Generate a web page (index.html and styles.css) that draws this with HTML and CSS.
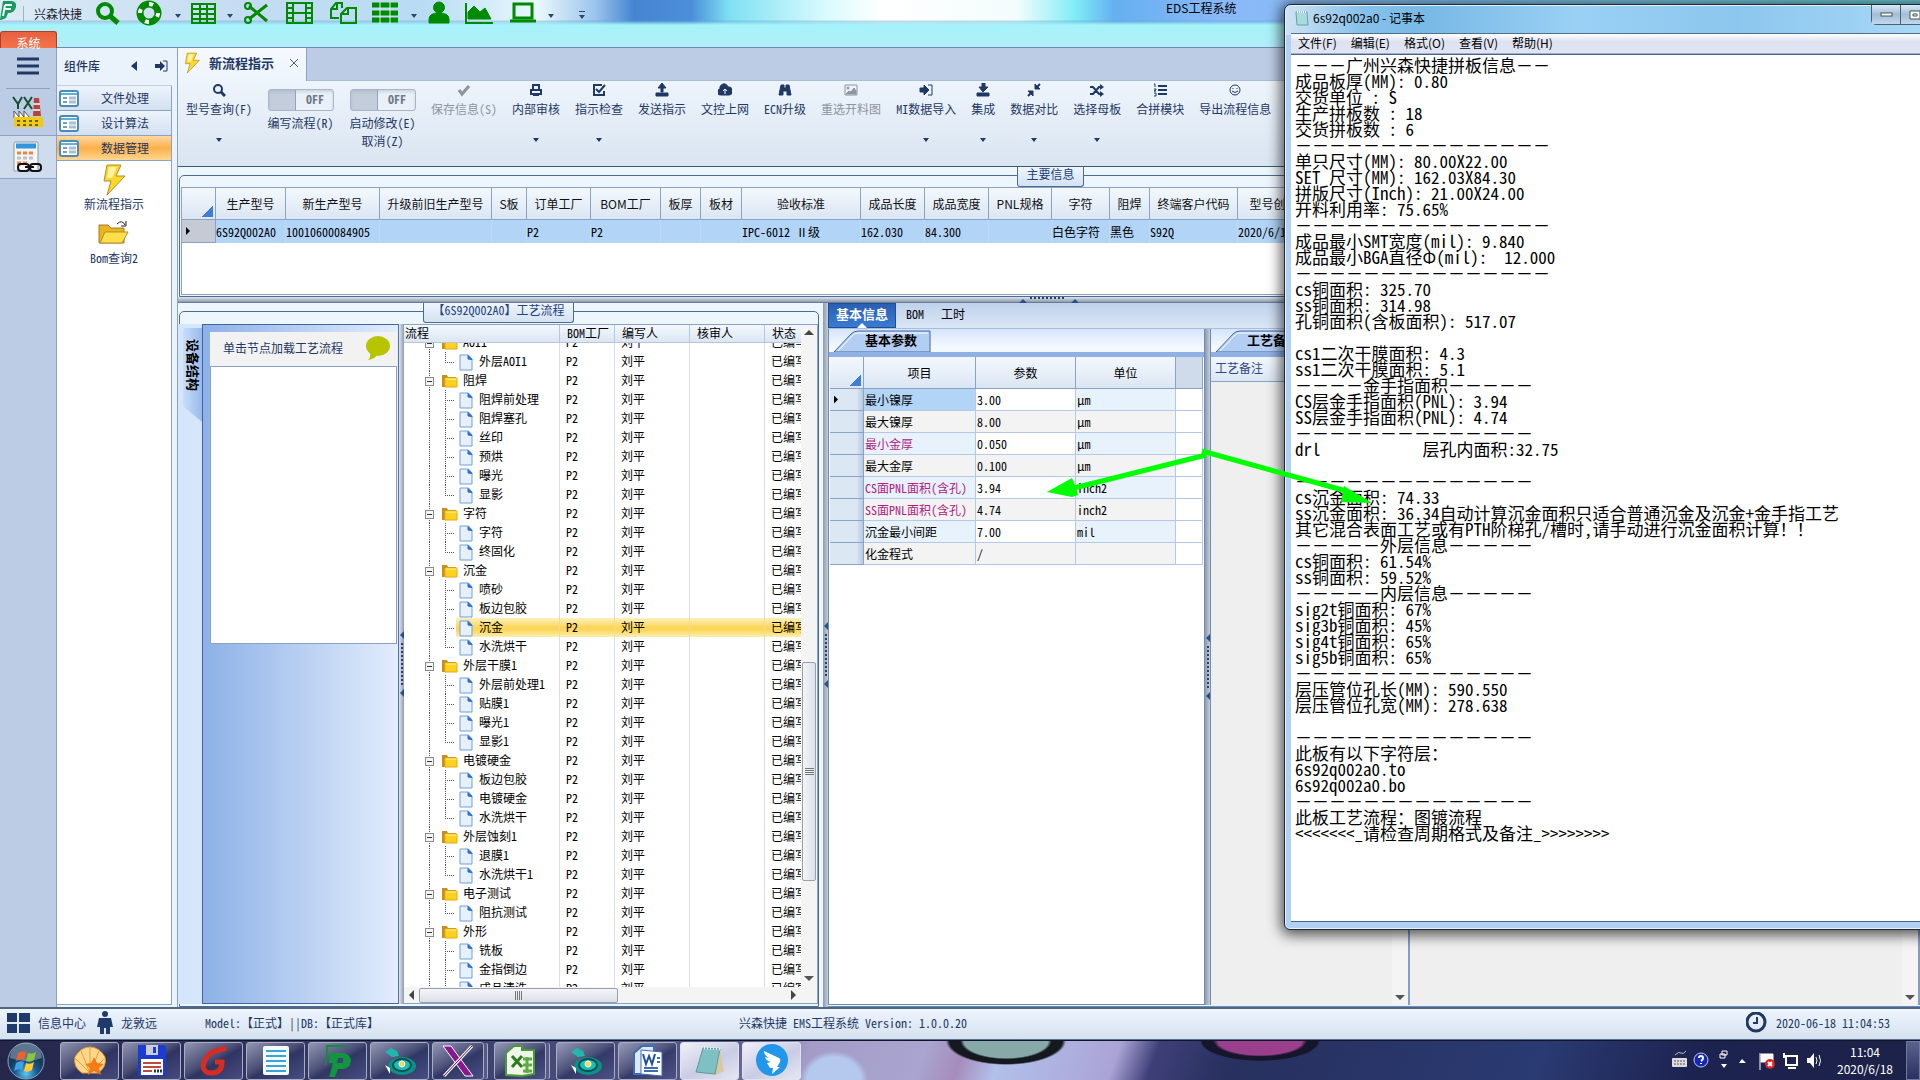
FILE: index.html
```
<!DOCTYPE html>
<html lang="zh-CN">
<head>
<meta charset="utf-8">
<title>EDS工程系统</title>
<link rel="stylesheet" href="styles.css">
</head>
<body>
<svg class="defs" aria-hidden="true">
  <symbol id="doc" viewBox="0 0 14 17"><path d="M1 1h8.500l3.500 4v11H1z" fill="#e6f0ff" stroke="#6f9fdc"/><path d="M9 1.500l4 4-4-.5z" fill="#2c6cd0" stroke="#2c6cd0"/></symbol>
  <symbol id="folder" viewBox="0 0 16 14"><path d="M0 1h5l1 2h8v10H0z" fill="#c98f1c"/><path d="M3 4h12v9H3z" fill="#ffd21f" stroke="#e8a90c"/><path d="M3.500 5h11" stroke="#fff2a0"/></symbol>
  <symbol id="form" viewBox="0 0 20 17"><rect x="1" y="1" width="18" height="15" rx="2" fill="#fff" stroke="#4d8bb5" stroke-width="2"/><path d="M2 4h16" stroke="#56b5df" stroke-width="2"/><path d="M4 8h4M4 12h4" stroke="#7a9cc0" stroke-width="2"/><path d="M10 8h7M10 12h7" stroke="#a9bfd8" stroke-width="3"/></symbol>
  <symbol id="bolt" viewBox="0 0 24 32"><path d="M5 1h14l-5 11h9L5 31l4-14H2z" fill="#ffd62a" stroke="#b08a2c"/><path d="M7 3h8l-5 11H5z" fill="#fff3a6"/></symbol>
  <symbol id="orca" viewBox="0 0 34 32"><ellipse cx="19" cy="21" rx="14" ry="9" fill="#0e8f88"/><ellipse cx="19" cy="20" rx="9" ry="6" fill="#19c0b6" stroke="#064e50" stroke-width="2"/><circle cx="19" cy="19" r="3" fill="#ffd84a" stroke="#fff"/><path d="M2 7l6-4 6 3 2 5-7 1z" fill="#20b8ae"/><path d="M2 20l5 3v6z" fill="#fff"/></symbol>
</svg>

<header class="titlebar">
  <div class="quick">
    <svg class="logo" width="17" height="20" viewBox="0 0 17 20"><path d="M3 0h9q5 1 4 6-1 5-6 6H8l-2 5-5 2H0z" fill="#1d9a62"/><path d="M5 4h7M5 4L3 15M5 8h6" stroke="#e9fff3" stroke-width="2" fill="none"/></svg>
    <span class="brand">兴森快捷</span>
    <svg class="q" width="458" height="26" viewBox="0 0 458 26" fill="none" stroke="#008a00">
      <circle cx="9" cy="11" r="7" stroke-width="4"/><path d="M14 16l8 7" stroke-width="5"/>
      <circle cx="53" cy="13" r="9" stroke-width="7"/><circle cx="53" cy="13" r="9" stroke="#fff" stroke-width="4" stroke-dasharray="4 10.100"/>
      <path d="M96 4h23v19H96zM96 9h23M96 14h23M96 19h23M104 4v19M111 4v19" stroke-width="2"/>
      <path d="M171 21L153 6M171 5l-18 14" stroke-width="3"/><circle cx="152" cy="6" r="3" stroke-width="2"/><circle cx="152" cy="20" r="3" stroke-width="2"/>
      <path d="M191 3h25v20h-25zM197 3v20M210 3v20M197 13h13M191 8h6M191 13h6M191 18h6M210 8h6M210 13h6M210 18h6" stroke-width="2"/>
      <path d="M246 8V3h-6l-5 6v9h8M241 3v6h-6" stroke-width="2"/><path d="M260 8h-9l-6 6v9h15V8zM252 8v6h-7" stroke-width="2"/>
      <path d="M276 5h26M276 13h26M276 20h26" stroke-width="5"/><path d="M284 2v22M294 2v22" stroke="#dff3f4"/>
      <path d="M343 2a5 5 0 0 1 0 11a5 5 0 0 1 0-11M333 23v-4q0-6 10-6t10 6v4z" fill="#008a00"/>
      <path d="M370 3v20h27" stroke-width="2"/><path d="M372 19v-7l6-6 6 6 5-4 6 11z" fill="#008a00"/>
      <path d="M418 4h18v14h-18z" stroke-width="3"/><path d="M414 21h26" stroke-width="3"/>
      <g fill="#28496d" stroke="none"><path d="M79 14h6l-3 4zM131 14h6l-3 4zM315 14h6l-3 4zM452 14h6l-3 4z"/></g>
    </svg>
    <span class="more" aria-hidden="true"></span>
  </div>
  <h1>EDS工程系统</h1>
  <button class="systab">系统</button>
</header>

<main>
  <nav class="rail">
    <button aria-label="菜单"><svg width="22" height="18" viewBox="0 0 22 18"><path d="M0 2h22M0 9h22M0 16h22" stroke="#1f3864" stroke-width="3"/></svg></button>
    <button aria-label="工厂"><svg width="32" height="32" viewBox="0 0 32 32"><path d="M1 1l5 7 4-7M6 8v5M12 1l8 12M20 1l-8 12" fill="none" stroke="#15502e" stroke-width="2"/><path d="M21 20l1-18h5l2 18z" fill="#b5433e"/><path d="M21 8h7M21 14h7" stroke="#e4d3d3" stroke-width="2"/><path d="M2 22v-7l5 6v-6l5 6v-6l6 7z" fill="#fff" stroke="#555"/><path d="M2 21h29v10H2z" fill="#f2cb10"/><path d="M5 25h24M5 29h24" stroke="#705c00" stroke-width="2" stroke-dasharray="3 3"/></svg></button>
    <button class="on" aria-label="计算"><svg width="30" height="32" viewBox="0 0 30 32"><rect x="1" y="1" width="24" height="29" rx="1" fill="#f6f6f6" stroke="#8a98a6"/><path d="M3 5h20" stroke="#2f97dd" stroke-width="5"/><path d="M4 12h17M4 22h10" stroke="#f28440" stroke-width="3" stroke-dasharray="4 2"/><path d="M4 17h17" stroke="#b9c1c9" stroke-width="3" stroke-dasharray="4 2"/><g fill="none" stroke="#111" stroke-width="2"><rect x="5" y="23" width="11" height="7" rx="3"/><rect x="17" y="23" width="11" height="7" rx="3"/><path d="M12 26h9"/></g></svg></button>
  </nav>

  <aside class="library">
    <div class="lib-head"><h2>组件库</h2>
      <svg width="38" height="12" viewBox="0 0 38 12"><path d="M6 1v10L0 6z" fill="#1f3864"/><path d="M24 4h5V1l5 5-5 5V8h-5z" fill="#1f3864"/><path d="M32 1h4v10h-4" fill="none" stroke="#1f3864"/></svg>
    </div>
    <div class="lib-body">
      <button class="cat"><svg width="20" height="17"><use href="#form"/></svg><span>文件处理</span></button>
      <button class="cat"><svg width="20" height="17"><use href="#form"/></svg><span>设计算法</span></button>
      <button class="cat on"><svg width="20" height="17"><use href="#form"/></svg><span>数据管理</span></button>
      <a class="tool" href="#flow"><svg width="24" height="32"><use href="#bolt"/></svg>新流程指示</a>
      <a class="tool" href="#bom"><svg width="32" height="26" viewBox="0 0 32 26"><path d="M1 5h9l3 3h13v15H1z" fill="#e9b41c" stroke="#9c8038"/><path d="M7 12h23l-6 11H2z" fill="#ffe04a" stroke="#b08f2c"/><path d="M19 4q5-5 8 1M28 1v5h-5" fill="none" stroke="#222"/></svg>Bom查询2</a>
    </div>
  </aside>

  <section class="work">
    <div class="doc-tabs"><div class="doc-tab"><svg width="16" height="24" viewBox="0 0 24 32"><use href="#bolt"/></svg><b>新流程指示</b><button aria-label="关闭"><svg width="8" height="8" viewBox="0 0 8 8"><path d="M0 0l8 8M8 0L0 8" stroke="#4a6080"/></svg></button></div></div>

    <div class="toolbar">
      <button><svg class="g" viewBox="0 0 14 14"><circle cx="6" cy="6" r="4" fill="none" stroke-width="2"/><path d="M9 9l4 4" stroke-width="3"/></svg><span>型号查询(F)</span><i></i></button>
      <label class="switch"><input type="checkbox"><b>OFF</b><span>编写流程(R)</span></label>
      <label class="switch"><input type="checkbox"><b>OFF</b><span>启动修改(E)</span><span>取消(Z)</span></label>
      <button disabled><svg class="g" viewBox="0 0 14 14"><path d="M2 7l3 4 7-8" fill="none" stroke-width="3"/></svg><span>保存信息(S)</span></button>
      <button><svg class="g" viewBox="0 0 14 14"><path d="M4 6V2h6v4M2 7h10v4H2z" stroke-width="2" fill="none"/><path d="M4 12h6" stroke-width="2"/></svg><span>内部审核</span><i></i></button>
      <button><svg class="g" viewBox="0 0 14 14"><path d="M12 8v4H2V2h8" stroke-width="2" fill="none"/><path d="M4 6l3 3 6-7" stroke-width="2" fill="none"/></svg><span>指示检查</span><i></i></button>
      <button><svg class="g" viewBox="0 0 14 14"><path d="M7 0l4 5H8v4H6V5H3zM1 10h12v3H1z"/></svg><span>发送指示</span></button>
      <button><svg class="g" viewBox="0 0 14 14"><path d="M3 12a3 3 0 0 1-1-6 4 4 0 0 1 8-2 4 4 0 0 1 1 8z"/><path d="M7 11V6M5 8l2-2 2 2" stroke="#fff" fill="none"/></svg><span>文控上网</span></button>
      <button><svg class="g" viewBox="0 0 14 14"><path d="M3 2h3v3h2V2h3l2 10H9V8H5v4H1z"/></svg><span>ECN升级</span></button>
      <button disabled><svg class="g" viewBox="0 0 14 14"><path d="M1 2h12v10H1z" fill="none"/><path d="M2 11l3-3 2 1 3-4 2 3v3z"/><circle cx="4" cy="5" r="1"/></svg><span>重选开料图</span></button>
      <button><svg class="g" viewBox="0 0 14 14"><path d="M1 5h4V2l5 5-5 5V9H1z"/><path d="M9 2h4v10H9" fill="none"/></svg><span>MI数据导入</span><i></i></button>
      <button><svg class="g" viewBox="0 0 14 14"><path d="M6 0h3v4h3L7 9 3 4h3zM1 10h12v3H1z"/></svg><span>集成</span><i></i></button>
      <button><svg class="g" viewBox="0 0 14 14"><path d="M8 1v5h5zM6 13V8H1z"/><path d="M9 5l4-4M5 9l-4 4" stroke-width="2"/></svg><span>数据对比</span><i></i></button>
      <button><svg class="g" viewBox="0 0 14 14"><path d="M0 4h3l6 7h2M0 11h3l6-7h2" fill="none" stroke-width="2"/><path d="M10 1l4 3-4 3zM10 8l4 3-4 3z" stroke="none"/></svg><span>选择母板</span><i></i></button>
      <button><svg class="g" viewBox="0 0 14 14"><path d="M5 3h9M5 7h9M5 11h9" stroke-width="2"/><path d="M1 1h1v3M1 6h2v1L1 8h2M1 10h2v3H1" fill="none"/></svg><span>合拼模块</span></button>
      <button><svg class="g" viewBox="0 0 14 14"><circle cx="7" cy="7" r="5" fill="none"/><path d="M5 5v1M9 5v1M4 8q3 3 6 0" fill="none"/></svg><span>导出流程信息</span></button>
    </div>

    <section class="group main-info">
      <h3>主要信息</h3>
      <div class="grid-box">
        <table class="grid">
          <colgroup><col style="width:34px"><col style="width:70px"><col style="width:94px"><col style="width:112px"><col style="width:35px"><col style="width:64px"><col style="width:70px"><col style="width:40px"><col style="width:41px"><col style="width:119px"><col style="width:64px"><col style="width:64px"><col style="width:63px"><col style="width:58px"><col style="width:40px"><col style="width:88px"><col style="width:96px"><col></colgroup>
          <thead><tr><th class="corner"></th><th>生产型号</th><th>新生产型号</th><th>升级前旧生产型号</th><th>S板</th><th>订单工厂</th><th>BOM工厂</th><th>板厚</th><th>板材</th><th>验收标准</th><th>成品长度</th><th>成品宽度</th><th>PNL规格</th><th>字符</th><th>阻焊</th><th>终端客户代码</th><th>型号创建时间</th><th></th></tr></thead>
          <tbody><tr><th class="mark"></th><td>6S92Q002A0</td><td>10010600084905</td><td></td><td></td><td>P2</td><td>P2</td><td></td><td></td><td>IPC-6012 Ⅱ级</td><td>162.030</td><td>84.300</td><td></td><td>白色字符</td><td>黑色</td><td>S92Q</td><td>2020/6/18</td><td></td></tr></tbody>
        </table>
      </div>
    </section>
    <div class="split-h"><svg width="60" height="6" viewBox="0 0 60 6"><path d="M0 6l4-4 4 4zM52 6l4-4 4 4z" fill="#2d4f88"/><path d="M11 1h36" stroke="#2d3f70" stroke-width="2" stroke-dasharray="2 2"/></svg></div>

    <div class="lower">
      <section class="group flow" id="flow">
        <h3>【6S92Q002A0】工艺流程</h3>
        <div class="flow-body">
          <div class="vtab"><b>设备结构</b></div>
          <div class="device">
            <div class="hint"><span>单击节点加载工艺流程</span><svg width="25" height="26" viewBox="0 0 25 26"><ellipse cx="12" cy="11" rx="12" ry="10" fill="#b9c400"/><path d="M4 17q1 5-2 8 7-1 9-5z" fill="#b9c400"/></svg></div>
            <div class="blank"></div>
          </div>
          <div class="split-v"><svg width="5" height="66" viewBox="0 0 5 66"><path d="M5 0v8L1 4zM5 58v8l-4-4z" fill="#2d4f88"/><path d="M3 12v42" stroke="#2d3f70" stroke-width="2" stroke-dasharray="2 2"/></svg></div>
          <div class="tree-box">
            <div class="tree-main">
              <div class="tree-head"><span>流程</span><span>BOM工厂</span><span>编写人</span><span>核审人</span><span>状态</span></div>
              <div class="tree-clip">
              <table class="tree">
                <colgroup><col style="width:156px"><col style="width:55px"><col style="width:75px"><col style="width:75px"><col></colgroup>
                <tbody>
                <tr><td class="f"><button aria-label="折叠"></button><svg><use href="#folder"/></svg>AOI1</td><td>P2</td><td>刘平</td><td></td><td>已编写</td></tr>
                <tr><td class="l e"><svg><use href="#doc"/></svg>外层AOI1</td><td>P2</td><td>刘平</td><td></td><td>已编写</td></tr>
                <tr><td class="f"><button aria-label="折叠"></button><svg><use href="#folder"/></svg>阻焊</td><td>P2</td><td>刘平</td><td></td><td>已编写</td></tr>
                <tr><td class="l"><svg><use href="#doc"/></svg>阻焊前处理</td><td>P2</td><td>刘平</td><td></td><td>已编写</td></tr>
                <tr><td class="l"><svg><use href="#doc"/></svg>阻焊塞孔</td><td>P2</td><td>刘平</td><td></td><td>已编写</td></tr>
                <tr><td class="l"><svg><use href="#doc"/></svg>丝印</td><td>P2</td><td>刘平</td><td></td><td>已编写</td></tr>
                <tr><td class="l"><svg><use href="#doc"/></svg>预烘</td><td>P2</td><td>刘平</td><td></td><td>已编写</td></tr>
                <tr><td class="l"><svg><use href="#doc"/></svg>曝光</td><td>P2</td><td>刘平</td><td></td><td>已编写</td></tr>
                <tr><td class="l e"><svg><use href="#doc"/></svg>显影</td><td>P2</td><td>刘平</td><td></td><td>已编写</td></tr>
                <tr><td class="f"><button aria-label="折叠"></button><svg><use href="#folder"/></svg>字符</td><td>P2</td><td>刘平</td><td></td><td>已编写</td></tr>
                <tr><td class="l"><svg><use href="#doc"/></svg>字符</td><td>P2</td><td>刘平</td><td></td><td>已编写</td></tr>
                <tr><td class="l e"><svg><use href="#doc"/></svg>终固化</td><td>P2</td><td>刘平</td><td></td><td>已编写</td></tr>
                <tr><td class="f"><button aria-label="折叠"></button><svg><use href="#folder"/></svg>沉金</td><td>P2</td><td>刘平</td><td></td><td>已编写</td></tr>
                <tr><td class="l"><svg><use href="#doc"/></svg>喷砂</td><td>P2</td><td>刘平</td><td></td><td>已编写</td></tr>
                <tr><td class="l"><svg><use href="#doc"/></svg>板边包胶</td><td>P2</td><td>刘平</td><td></td><td>已编写</td></tr>
                <tr class="sel"><td class="l"><svg><use href="#doc"/></svg>沉金</td><td>P2</td><td>刘平</td><td></td><td>已编写</td></tr>
                <tr><td class="l e"><svg><use href="#doc"/></svg>水洗烘干</td><td>P2</td><td>刘平</td><td></td><td>已编写</td></tr>
                <tr><td class="f"><button aria-label="折叠"></button><svg><use href="#folder"/></svg>外层干膜1</td><td>P2</td><td>刘平</td><td></td><td>已编写</td></tr>
                <tr><td class="l"><svg><use href="#doc"/></svg>外层前处理1</td><td>P2</td><td>刘平</td><td></td><td>已编写</td></tr>
                <tr><td class="l"><svg><use href="#doc"/></svg>贴膜1</td><td>P2</td><td>刘平</td><td></td><td>已编写</td></tr>
                <tr><td class="l"><svg><use href="#doc"/></svg>曝光1</td><td>P2</td><td>刘平</td><td></td><td>已编写</td></tr>
                <tr><td class="l e"><svg><use href="#doc"/></svg>显影1</td><td>P2</td><td>刘平</td><td></td><td>已编写</td></tr>
                <tr><td class="f"><button aria-label="折叠"></button><svg><use href="#folder"/></svg>电镀硬金</td><td>P2</td><td>刘平</td><td></td><td>已编写</td></tr>
                <tr><td class="l"><svg><use href="#doc"/></svg>板边包胶</td><td>P2</td><td>刘平</td><td></td><td>已编写</td></tr>
                <tr><td class="l"><svg><use href="#doc"/></svg>电镀硬金</td><td>P2</td><td>刘平</td><td></td><td>已编写</td></tr>
                <tr><td class="l e"><svg><use href="#doc"/></svg>水洗烘干</td><td>P2</td><td>刘平</td><td></td><td>已编写</td></tr>
                <tr><td class="f"><button aria-label="折叠"></button><svg><use href="#folder"/></svg>外层蚀刻1</td><td>P2</td><td>刘平</td><td></td><td>已编写</td></tr>
                <tr><td class="l"><svg><use href="#doc"/></svg>退膜1</td><td>P2</td><td>刘平</td><td></td><td>已编写</td></tr>
                <tr><td class="l e"><svg><use href="#doc"/></svg>水洗烘干1</td><td>P2</td><td>刘平</td><td></td><td>已编写</td></tr>
                <tr><td class="f"><button aria-label="折叠"></button><svg><use href="#folder"/></svg>电子测试</td><td>P2</td><td>刘平</td><td></td><td>已编写</td></tr>
                <tr><td class="l e"><svg><use href="#doc"/></svg>阻抗测试</td><td>P2</td><td>刘平</td><td></td><td>已编写</td></tr>
                <tr><td class="f"><button aria-label="折叠"></button><svg><use href="#folder"/></svg>外形</td><td>P2</td><td>刘平</td><td></td><td>已编写</td></tr>
                <tr><td class="l"><svg><use href="#doc"/></svg>铣板</td><td>P2</td><td>刘平</td><td></td><td>已编写</td></tr>
                <tr><td class="l"><svg><use href="#doc"/></svg>金指倒边</td><td>P2</td><td>刘平</td><td></td><td>已编写</td></tr>
                <tr><td class="l"><svg><use href="#doc"/></svg>成品清洗</td><td>P2</td><td>刘平</td><td></td><td>已编写</td></tr>
                </tbody>
              </table>
              </div>
              <div class="hbar"><span class="al"></span><span class="thumb"></span><span class="ar"></span></div>
            </div>
            <div class="vbar"><span class="au"></span><span class="thumb"></span><span class="ad"></span></div>
          </div>
        </div>
      </section>
      <div class="split-v outer"><svg width="5" height="66" viewBox="0 0 5 66"><path d="M5 0v8L1 4zM5 58v8l-4-4z" fill="#2d4f88"/><path d="M3 12v42" stroke="#2d3f70" stroke-width="2" stroke-dasharray="2 2"/></svg></div>

      <section class="detail">
        <div class="tabs"><button class="on">基本信息</button><button>BOM</button><button>工时</button></div>
        <div class="panes">
          <div class="pane params">
            <div class="strip"><svg width="100" height="22" viewBox="0 0 100 22"><path d="M3 22L20 4q3-3 7-3h72v21z" fill="#b4cdf2" stroke="#3f68a8"/><path d="M7 21L22 5q2-2 5-2h70" fill="none" stroke="#fff"/></svg><b>基本参数</b></div>
            <div class="pane-body">
            <table class="ptable">
              <colgroup><col style="width:34px"><col style="width:112px"><col style="width:100px"><col style="width:100px"><col></colgroup>
              <thead><tr><th class="corner"></th><th>项目</th><th>参数</th><th>单位</th><th class="pad"></th></tr></thead>
              <tbody>
              <tr><th class="mark"></th><td class="cur">最小镍厚</td><td>3.00</td><td>μm</td><td></td></tr>
              <tr><th></th><td>最大镍厚</td><td>8.00</td><td>μm</td><td></td></tr>
              <tr><th></th><td class="key">最小金厚</td><td>0.050</td><td>μm</td><td></td></tr>
              <tr><th></th><td>最大金厚</td><td>0.100</td><td>μm</td><td></td></tr>
              <tr><th></th><td class="key">CS面PNL面积(含孔)</td><td>3.94</td><td>inch2</td><td></td></tr>
              <tr><th></th><td class="key">SS面PNL面积(含孔)</td><td>4.74</td><td>inch2</td><td></td></tr>
              <tr><th></th><td>沉金最小间距</td><td>7.00</td><td>mil</td><td></td></tr>
              <tr><th></th><td>化金程式</td><td>/</td><td></td><td></td></tr>
              </tbody>
            </table>
            </div>
          </div>
          <div class="split-v outer"><svg width="5" height="66" viewBox="0 0 5 66"><path d="M5 0v8L1 4zM5 58v8l-4-4z" fill="#2d4f88"/><path d="M3 12v42" stroke="#2d3f70" stroke-width="2" stroke-dasharray="2 2"/></svg></div>
          <div class="pane notes">
            <div class="strip"><svg width="100" height="22" viewBox="0 0 100 22"><path d="M3 22L20 4q3-3 7-3h72v21z" fill="#b4cdf2" stroke="#3f68a8"/><path d="M7 21L22 5q2-2 5-2h70" fill="none" stroke="#fff"/></svg><b>工艺备注</b></div>
            <div class="note-cols">
              <div class="note-col"><h4>工艺备注</h4><div class="vbar"><span class="ad"></span></div></div>
              <div class="note-col last"><h4></h4><div class="vbar"><span class="ad"></span></div></div>
            </div>
          </div>
        </div>
      </section>
    </div>
  </section>
</main>

<footer class="status">
  <svg width="23" height="20" viewBox="0 0 23 20"><path d="M0 0h10v9H0zM12 0h11v9H12zM0 11h10v9H0zM12 11h11v9H12z" fill="#1f3b6e"/></svg>
  <span class="info">信息中心</span>
  <svg width="16" height="24" viewBox="0 0 16 24"><circle cx="8" cy="3" r="3" fill="#1f3b6e"/><path d="M2 7h12l2 9h-3v7H9v-6H7v6H3v-7H0z" fill="#1f3b6e"/></svg>
  <span class="user">龙敦远</span>
  <span class="model">Model:【正式】||DB:【正式库】</span>
  <span class="version">兴森快捷 EMS工程系统 Version: 1.0.0.20</span>
  <svg width="21" height="21" viewBox="0 0 21 21"><circle cx="10" cy="10" r="9" fill="none" stroke="#1f3864" stroke-width="3"/><path d="M11 5v6H7" fill="none" stroke="#1f3864" stroke-width="2"/></svg>
  <time>2020-06-18 11:04:53</time>
</footer>

<footer class="taskbar">
  <button class="start" aria-label="开始"><svg width="38" height="38" viewBox="0 0 38 38"><defs><radialGradient id="orb" cy=".85"><stop offset="0" stop-color="#5ec8f0"/><stop offset=".6" stop-color="#1a5a94"/><stop offset="1" stop-color="#173a5c"/></radialGradient></defs><circle cx="19" cy="19" r="18" fill="url(#orb)" stroke="#7fa8c4"/><path d="M3 16a16 15 0 0 1 32 0q-16 6-32 0" fill="#fff" opacity=".3"/><path d="M11 11q4-3 8-1l-2 8q-4-2-8 1z" fill="#f0622c"/><path d="M21 11q4 2 8-1l-2 8q-4 3-8 1z" fill="#8cc63f"/><path d="M9 21q4-3 8-1l-2 8q-4-2-8 1z" fill="#3fa2e4"/><path d="M19 21q4 2 8-1l-2 8q-4 3-8 1z" fill="#ffcb2f"/></svg></button>
  <button class="app" aria-label="贝壳"><svg width="34" height="32" viewBox="0 0 34 32"><path d="M9 28Q0 22 2 12 8 2 17 2t15 10q2 10-7 16z" fill="#ffd889" stroke="#e79d38"/><path d="M17 28L8 6M17 28V2M17 28l9-22M17 28L3 14M17 28l14-14" stroke="#e79d38"/><path d="M21 12l3 6 7 1-5 4 2 7-7-4-6 4 2-7-5-4 6-1z" fill="#f57a18"/></svg></button>
  <button class="app" aria-label="保存"><svg width="28" height="31" viewBox="0 0 28 31"><path d="M0 0h26l2 2v29H0z" fill="#1c3bd0"/><path d="M8 0h12v10H8z" fill="#c9ccd4"/><path d="M15 2h3v6h-3z" fill="#1c3bd0"/><path d="M3 14h22v16H3z" fill="#fff"/><path d="M5 18h18M5 22h18M5 26h9" stroke="#c2483c" stroke-width="2"/><path d="M16 26h8" stroke="#333" stroke-width="3" stroke-dasharray="2 1"/></svg></button>
  <button class="app" aria-label="Genesis"><svg width="30" height="31" viewBox="0 0 30 31"><path d="M27 3L13 7Q5 13 4 21q1 8 10 7 9-1 9-11h-7" fill="none" stroke="#d92c20" stroke-width="5"/></svg></button>
  <button class="app" aria-label="文本"><svg width="26" height="29" viewBox="0 0 26 29"><rect width="26" height="29" rx="2" fill="#f4fbff"/><path d="M3 5h20M3 10h20M3 15h20M3 20h20M3 25h20" stroke="#3aa5d4" stroke-width="2"/></svg></button>
  <button class="app" aria-label="快捷"><svg width="28" height="32" viewBox="0 0 28 32"><path d="M3 14V1h18M3 16l-2 4" fill="none" stroke="#0d8f3c" stroke-width="2"/><path d="M6 8h14q7 2 7 8-1 8-9 8h-4l-3 8H5l4-14h-4z" fill="#0f963f"/><path d="M14 13h5v5h-6z" fill="#3d4370"/></svg></button>
  <button class="app" aria-label="Orca"><svg width="34" height="32"><use href="#orca"/></svg></button>
  <button class="app stack" aria-label="X"><svg width="32" height="32" viewBox="0 0 32 32"><path d="M1 1h8l22 30h-8z" fill="#8a1690" stroke="#fff"/><path d="M30 1L2 31" stroke="#fff" stroke-width="3"/><path d="M30 1L2 31" stroke="#51105c"/></svg></button>
  <button class="app stack" aria-label="Excel"><svg width="30" height="32" viewBox="0 0 30 32"><path d="M1 30V8l8-7h8v4h12v24l-12 2z" fill="#eef6e9" stroke="#4d9a35" stroke-width="2"/><path d="M18 14h9M18 20h9M18 26h9M22 12v16" stroke="#5dab42" stroke-width="3"/><path d="M7 11l10 11M17 11L7 22" stroke="#2d7c22" stroke-width="3"/></svg></button>
  <button class="app" aria-label="Orca 2"><svg width="34" height="32"><use href="#orca"/></svg></button>
  <button class="app" aria-label="Word"><svg width="30" height="32" viewBox="0 0 30 32"><path d="M1 29V8l8-7h12v28z" fill="#dde9f8" stroke="#3d6cb5" stroke-width="2"/><path d="M8 5l21 2v24L8 29z" fill="#fff" stroke="#3d6cb5"/><path d="M10 9l3 10 3-8 3 8 3-10" fill="none" stroke="#244f9e" stroke-width="2"/><path d="M11 23h14M11 26h14M24 13h3M24 17h3" stroke="#3d6cb5" stroke-width="2"/></svg></button>
  <button class="app lit" aria-label="记事本"><svg width="32" height="32" viewBox="0 0 32 32"><path d="M9 3l17 1 4 22-8 4-20-3z" fill="#d9c9a0"/><path d="M9 3l17 1-5 25-19-2z" fill="#7fc0c4" stroke="#5d9ba0"/><path d="M10 3l16 1" stroke="#eee" stroke-width="3" stroke-dasharray="1 2"/></svg></button>
  <button class="app lit" aria-label="钉钉"><svg width="32" height="33" viewBox="0 0 32 33"><circle cx="16" cy="16" r="16" fill="#2296ea"/><path d="M8 7l15 7q2 1 1 4l-3 5h3l-8 7 1-6h-3l-3-5 4-1q-5-1-6-5l4 1q-5-3-5-7z" fill="#fff"/></svg></button>
  <svg class="tray" width="150" height="24" viewBox="0 0 150 24">
    <rect x="0" y="9" width="15" height="9" rx="1" fill="#ddd"/><path d="M2 12h11M2 15h11" stroke="#555" stroke-dasharray="2 1"/><path d="M3 6q4-4 6-2t5-2" fill="none" stroke="#bbb"/>
    <circle cx="29" cy="11" r="7" fill="#1428b8" stroke="#c5c9dc"/><path d="M27 9q0-2 2-2t2 2-2 3M29 14v1" fill="none" stroke="#fff" stroke-width="2"/>
    <path d="M50 2h5v4h-5zM48 5h5v4h-5z" fill="none" stroke="#fff"/><path d="M49 15h6l-3 4z" fill="#fff"/>
    <path d="M67 14h7l-4-4z" fill="#fff"/>
    <path d="M88 4v17M89 5h12v8H89z" fill="#fff" stroke="#fff"/><circle cx="98" cy="15" r="5" fill="#d22"/><path d="M96 13l4 4M100 13l-4 4" stroke="#fff" stroke-width="2"/>
    <path d="M114 7h11v9h-11zM116 19h8M112 4v5" fill="none" stroke="#fff" stroke-width="2"/>
    <path d="M135 9h3l4-5v15l-4-5h-3z" fill="#fff"/><path d="M144 8q2 4 0 7M147 6q3 6 0 11" fill="none" stroke="#fff"/>
  </svg>
  <div class="clock"><span>11:04</span><span>2020/6/18</span></div>
  <button class="peek" aria-label="显示桌面"></button>
</footer>

<section class="notepad">
  <header><svg width="14" height="16" viewBox="0 0 14 16"><path d="M1 2h11l1 13H2z" fill="#a9dcdf" stroke="#6b9fa8"/><path d="M2 2h10" stroke="#fff" stroke-width="2" stroke-dasharray="1 1"/></svg><h2>6s92q002a0 - 记事本</h2>
    <div class="win"><button aria-label="最小化"><svg width="13" height="5" viewBox="0 0 13 5"><rect x="1" y="1" width="11" height="3" fill="#fff" stroke="#455"/></svg></button><button aria-label="最大化"><svg width="12" height="10" viewBox="0 0 12 10"><path d="M1 1h10v8H1zM4 4h4v2H4z" fill="#fff" stroke="#455"/></svg></button></div></header>
  <nav><button>文件(F)</button><button>编辑(E)</button><button>格式(O)</button><button>查看(V)</button><button>帮助(H)</button></nav>
  <textarea aria-label="记事本内容" wrap="off" spellcheck="false">－－－广州兴森快捷拼板信息－－
成品板厚(MM): 0.80
交货单位 : S
生产拼板数 : 18
交货拼板数 : 6
－－－－－－－－－－－－－－－
单只尺寸(MM): 80.00X22.00
SET 尺寸(MM): 162.03X84.30
拼版尺寸(Inch): 21.00X24.00
开料利用率: 75.65%
－－－－－－－－－－－－－－－
成品最小SMT宽度(mil): 9.840
成品最小BGA直径Φ(mil):  12.000
－－－－－－－－－－－－－－－
cs铜面积: 325.70
ss铜面积: 314.98
孔铜面积(含板面积): 517.07

cs1二次干膜面积: 4.3
ss1二次干膜面积: 5.1
－－－－金手指面积－－－－－
CS层金手指面积(PNL): 3.94
SS层金手指面积(PNL): 4.74
－－－－－－－－－－－－－－
drl            层孔内面积:32.75

－－－－－－－－－－－－－－
cs沉金面积: 74.33
ss沉金面积: 36.34自动计算沉金面积只适合普通沉金及沉金+金手指工艺
其它混合表面工艺或有PTH阶梯孔/槽时,请手动进行沉金面积计算！！
－－－－－外层信息－－－－－
cs铜面积: 61.54%
ss铜面积: 59.52%
－－－－－内层信息－－－－－
sig2t铜面积: 67%
sig3b铜面积: 45%
sig4t铜面积: 65%
sig5b铜面积: 65%
－－－－－－－－－－－－－－
层压管位孔长(MM): 590.550
层压管位孔宽(MM): 278.638

－－－－－－－－－－－－－－
此板有以下字符层：
6s92q002a0.to
6s92q002a0.bo
－－－－－－－－－－－－－－
此板工艺流程：图镀流程
&lt;&lt;&lt;&lt;&lt;&lt;&lt;_请检查周期格式及备注_&gt;&gt;&gt;&gt;&gt;&gt;&gt;&gt;</textarea>
</section>

<svg class="arrows" width="332" height="60" viewBox="0 0 332 60"><path d="M166 10L34 43M162 6l144 40" stroke="#0f0" stroke-width="5"/><path d="M7 47l25-14 4 9 2 8-6 2zM332 58l-28-17-3 16z" fill="#0f0"/></svg>
</body>
</html>
```
FILE: styles.css
```
:root {
  --song: "Noto Sans Mono CJK SC", "Noto Sans CJK SC", sans-serif;
  --ui: "Noto Sans CJK SC", sans-serif;
  --navy: #1f3864;
  --line: #8aa2c4;
}
* { box-sizing: border-box; }
html, body { height: 100%; margin: 0; }
body {
  display: flex; flex-direction: column; position: relative; overflow: hidden;
  font: 12px/16px var(--song); color: #000; background: #bccce4;
}
h1, h2, h3, h4 { margin: 0; font-size: 12px; font-weight: 400; }
button { font: inherit; color: inherit; border: 0; padding: 0; margin: 0; background: none; }
svg { display: block; flex: none; }
.defs { display: none; }
table { border-collapse: separate; border-spacing: 0; table-layout: fixed; width: 100%; }
th, td { font-weight: 400; padding: 0; white-space: nowrap; overflow: hidden; }

/* title bar */
.titlebar {
  flex: none; height: 48px; position: relative; display: grid;
  grid-template-rows: 30px 18px; grid-template-columns: 1166px 1fr;
  background:
    linear-gradient(#0000 20px, #5a9fd066 21px, #a6f3fa 25px, #b2eefa),
    linear-gradient(90deg, #dcebf5, #c5dcf2 12%, #b8dcf4 22%, #eaf8fd 28%, #9cc4ec 31%, #4585d0 33%, #4d8edb 36%, #7fe0f4 38%, #d9fbfd 43%, #fff 46%, #f2fdfc 53%, #80edf6 56%, #65b0f0 58%, #8bb9f8 64%, #6fd0d8);
  border-bottom: 1px solid #6f8cb0;
}
.quick { display: flex; align-items: flex-start; }
.logo { margin-top: 1px; }
.brand { margin: 6px 14px 0 6px; padding-left: 10px; border-left: 1px solid #9db3c8; color: #223; }
.more { margin: 11px 0 0 25px; width: 6px; border-top: 1px solid #346; padding-top: 3px; }
.more::after { content: ""; display: block; border: 3px solid transparent; border-top: 4px solid #346; border-bottom: 0; }
.titlebar h1 { font-family: var(--ui); }
.systab {
  grid-column: 1; width: 57px; color: #fff; padding-top: 3px; line-height: 16px;
  background: linear-gradient(#e8603e, #f4744c); border: 1px solid #a8402a; border-bottom: 0; border-radius: 3px 3px 0 0;
  margin-top: 1px; height: 17px;
}

/* body */
main { flex: 1; min-height: 0; display: flex; }
.rail { width: 56px; flex: none; display: flex; flex-direction: column; background: #bccce4; }
.rail button { height: 47px; display: grid; place-items: center; border-bottom: 1px solid #8ba3c4; }
.rail button:first-child { height: 41px; margin: 0 6px; padding-bottom: 5px; }
.rail .on { background: #cfdcee; height: 43px; }
.library { width: 122px; flex: none; display: flex; flex-direction: column; background: #eaf2fb; border-left: 1px solid var(--line); border-right: 1px solid var(--line); padding: 0 5px 2px 0; }
.lib-head { height: 38px; display: flex; align-items: center; justify-content: space-between; padding: 0 3px 1px 7px; color: var(--navy); font-family: var(--ui); border-bottom: 1px solid #c0cee0; }
.lib-head h2 { font-weight: 500; }
.lib-body { flex: 1; background: #fff; border: 1px solid var(--line); border-width: 0 1px 1px 0; display: flex; flex-direction: column; }
.cat { height: 25px; display: flex; align-items: center; padding-left: 2px; color: var(--navy); background: linear-gradient(#edf4fc, #d3e0ef); border-bottom: 1px solid var(--line); }
.cat span { flex: 1; }
.cat.on { background: linear-gradient(#ffd9a0, #fdb04a 50%, #ffd692); }
.tool { display: flex; flex-direction: column; align-items: center; color: var(--navy); text-decoration: none; padding-top: 3px; }
.tool + .tool { padding-top: 8px; }
.tool + .tool svg { margin-bottom: 4px; }

.work { flex: 1; min-width: 0; display: flex; flex-direction: column; background: #eaf2fb; }
.doc-tabs { height: 33px; flex: none; background: #bccce4; display: flex; border-bottom: 1px solid #a9bdd8; }
.doc-tab { width: 129px; height: 33px; background: linear-gradient(#f6faff, #edf4fc); border-right: 1px solid var(--line); display: flex; align-items: center; padding: 0 8px 3px 6px; color: var(--navy); gap: 9px; }
.doc-tab b { font-size: 13px; flex: 1; }
.toolbar { height: 86px; flex: none; display: flex; gap: 15px; padding: 2px 8px; background: linear-gradient(#edf4fc, #dae5f1); border-bottom: 1px solid #3f5878; color: var(--navy); white-space: nowrap; overflow: hidden; }
.toolbar button { display: flex; flex-direction: column; align-items: center; gap: 4px; justify-content: flex-start; }
.g { width: 14px; height: 14px; fill: var(--navy); stroke: var(--navy); }
.toolbar button:disabled { color: #8e959e; }
.toolbar button:disabled .g { fill: #8e959e; stroke: #8e959e; }
.toolbar i { border: 3px solid transparent; border-top: 4px solid var(--navy); border-bottom: 0; margin-top: 17px; }
.switch { width: 67px; display: grid; grid-template-rows: 24px 16px 16px; padding-top: 6px; align-items: start; justify-items: center; row-gap: 2px; }
.switch input { appearance: none; grid-area: 1 / 1; margin: 0; width: 66px; height: 22px; border: 1px solid #a9b6c6; border-radius: 3px; background: linear-gradient(90deg, #c3cddb 26px, #94a3b6 26px 27px, #eaf0f8 27px); box-shadow: inset 0 2px 3px #8fa0b855; }
.switch b { grid-area: 1 / 1; justify-self: end; padding: 2px 10px 0 0; color: #6f7b8b; }

.group { background: #edf5fd; display: flex; flex-direction: column; position: relative; }
.group h3 { align-self: center; position: relative; z-index: 1; border: 1px solid #506b90; border-top: 0; border-radius: 0 0 3px 3px; background: linear-gradient(#eef5fc, #d4e2f2); color: #24427c; padding: 0 8px 4px; height: 20px; line-height: 14px; }
.group::before { content: ""; position: absolute; inset: 8px 0 0 1px; border: 1px solid #506b90; border-radius: 5px 5px 0 0; }
.main-info { flex: none; height: 130px; padding: 0 0 2px 3px; }
.grid-box { flex: 1; background: #fff; border: 1px solid var(--line); position: relative; overflow: hidden; }
.grid th { font-family: var(--ui); height: 32px; color: #111; background: linear-gradient(#f3f8fd, #dbe6f3); border-right: 1px solid var(--line); border-bottom: 1px solid var(--line); }
.grid td { height: 23px; padding: 0; background: #b1d4f7; border-right: 1px solid #bfdaf6; }
.grid tbody th { background: #c5cad4; height: 23px; }
.grid .corner, .ptable .corner { background: linear-gradient(135deg, #0000 50%, #3f7ed4 50%) no-repeat right 2px bottom 2px / 11px 11px, linear-gradient(#f3f8fd, #dbe6f3); }
.mark::before { content: ""; display: block; margin-left: 4px; width: 4px; height: 8px; background: #000; clip-path: polygon(0 0, 100% 50%, 0 100%); }
.split-h { flex: none; height: 6px; background: linear-gradient(#dce4ee, #8f9cac); display: flex; justify-content: center; border-bottom: 1px solid #6b7d94; }

.lower { flex: 1; min-height: 0; display: flex; }
.flow { width: 645px; flex: none; padding-bottom: 3px; border-right: 4px solid #edf5fd; }
.flow h3 { margin-bottom: 1px; }
.flow-body { flex: 1; min-height: 0; display: flex; padding-left: 5px; background: linear-gradient(90deg, #d5e5fb, #eaf3fd); margin: 0 1px 0 0; position: relative; }
.vtab { width: 19px; height: 94px; margin-top: 4px; background: linear-gradient(90deg, #c9ddf8, #98baea); clip-path: polygon(2px 0, 100% 0, 100% 100%, 0 78px, 0 2px); padding: 11px 0 0 2px; }
.vtab b { writing-mode: vertical-rl; text-orientation: sideways; font-size: 13px; line-height: 16px; }
.device { width: 197px; padding: 7px 1px 0 7px; border: 1px solid #41659c; border-right-color: #5573a5; background: linear-gradient(90deg, #8db1e7, #e2edfd); }
.hint { height: 35px; display: flex; align-items: center; justify-content: space-between; padding: 0 6px 2px 13px; background: #f2f2f2; color: var(--navy); border-bottom: 1px solid var(--line); }
.blank { height: 277px; background: #fff; border: 1px solid var(--line); border-top: 0; }
.split-v { width: 5px; flex: none; display: flex; align-items: center; background: linear-gradient(90deg, #dfe6ee, #8d9bad); }
.split-v.outer { background: linear-gradient(90deg, #8d9bad, #c5ced9); }
.tree-box { flex: 1; min-width: 0; display: flex; background: #fff; border: 1px solid var(--line); border-left: 0; }
.tree-main { flex: 1; min-width: 0; display: flex; flex-direction: column; }
.tree-head { height: 18px; flex: none; display: grid; grid-template-columns: 156px 55px 75px 75px 1fr; background: linear-gradient(#f3f8fd, #dbe6f3); border-bottom: 1px solid #b8c6da; line-height: 16px; }
.tree-head span { border-right: 1px solid #b8c6da; padding-left: 7px; overflow: hidden; white-space: nowrap; }
.tree-head span:first-child { padding-left: 1px; }
.tree-head span:last-child { border: 0; }
.tree-clip { flex: 1; min-height: 0; overflow: hidden; display: flex; align-items: flex-start; }
.tree { margin-top: -10px; }
.tree td { height: 19px; line-height: 14px; padding: 0 0 1px 6px; border-right: 1px solid #d9dde3; }
.tree td:last-child { border: 0; }
.tree tr td:first-child {
  --v: linear-gradient(#555 1px, #0000 1px) 25px 0 / 1px 2px repeat-y;
  background: var(--v);
}
.tree .f { padding-left: 21px; }
.tree .f button { display: inline-block; width: 9px; height: 9px; vertical-align: middle; margin: 0 8px 0 0; border: 1px solid #8b8b8b; background: linear-gradient(#333, #333) center / 5px 1px no-repeat #f4f4f4; }
.tree svg { display: inline-block; vertical-align: middle; width: 16px; height: 14px; margin: -1px 5px -1px 0; }
.tree .l { padding-left: 55px; }
.tree .l svg { width: 14px; height: 17px; margin: -3px 6px -3px 0; }
.tree tr td.l:first-child { background: linear-gradient(#555 1px, #0000 1px) 41px 0 / 1px 2px repeat-y, repeating-linear-gradient(90deg, #555 0 1px, #0000 1px 2px) 41px 10px / 10px 1px no-repeat, var(--v); }
.tree tr td.e:first-child { background: linear-gradient(#fff, #fff) 41px 11px / 1px 8px no-repeat, linear-gradient(#555 1px, #0000 1px) 41px 0 / 1px 2px repeat-y, repeating-linear-gradient(90deg, #555 0 1px, #0000 1px 2px) 41px 10px / 10px 1px no-repeat, var(--v); }
.tree .sel td { background: linear-gradient(#fdf0bc, #fbd65a 50%, #fbd85e 65%, #fdeeb0); border-color: #f3dc90; }
.tree .sel td.l:first-child { background: linear-gradient(#fdf0bc, #fbd65a 50%, #fbd85e 65%, #fdeeb0) 52px 0 no-repeat, linear-gradient(#555 1px, #0000 1px) 41px 0 / 1px 2px repeat-y, repeating-linear-gradient(90deg, #555 0 1px, #0000 1px 2px) 41px 10px / 10px 1px no-repeat, var(--v); }
.hbar { height: 16px; flex: none; display: flex; align-items: center; background: #f4f4f4; padding: 0 5px; }
.vbar { width: 16px; flex: none; display: flex; flex-direction: column; align-items: center; background: #f4f4f4; padding: 5px 0; }
.thumb { border: 1px solid #97a0ac; border-radius: 2px; background: #e7ebf1; }
.hbar .thumb { width: 199px; height: 15px; margin: 0 auto 0 5px; background: repeating-linear-gradient(90deg, #777 0 1px, #0000 1px 2px) center / 8px 9px no-repeat, linear-gradient(#f3f5f8, #dbe0e8); }
.vbar .thumb { height: 219px; width: 14px; margin: 327px 0 auto; background: repeating-linear-gradient(#777 0 1px, #0000 1px 2px) center / 9px 8px no-repeat, linear-gradient(90deg, #f3f5f8, #dbe0e8); }
.al, .ar, .au, .ad { border: 5px solid transparent; }
.al { border-right-color: #444; border-left: 0; }
.ar { border-left-color: #444; border-right: 0; }
.au { border-bottom-color: #444; border-top: 0; }
.ad { border-top-color: #555; border-bottom: 0; }
.tree-box .vbar { padding-bottom: 22px; }

.detail { flex: 1; min-width: 0; display: flex; flex-direction: column; }
.tabs { height: 26px; flex: none; display: flex; background: linear-gradient(#bfd2ec, #dae6f5); border-bottom: 1px solid #a9bdd8; }
.tabs button { padding: 0 0 3px; width: 38px; }
.tabs .on { width: 68px; color: #fff; font-weight: 700; font-size: 13px; background: linear-gradient(#2a5fb4, #3a7bd2); border: 1px solid #1f4d96; display: flex; flex-direction: column; align-items: center; padding: 2px 0 0; line-height: 16px; }
.tabs .on::after { content: ""; border: 5px solid transparent; border-bottom-color: #fff; border-top: 0; margin-top: 1px; }
.panes { flex: 1; min-height: 0; display: flex; padding-bottom: 1px; border-bottom: 1px solid #6d8db8; }
.pane { display: flex; flex-direction: column; min-width: 0; }
.params { width: 377px; flex: none; border: 1px solid #6d8db8; border-top: 0; }
.notes { flex: 1; border-left: 1px solid #6d8db8; }
.strip { height: 28px; flex: none; padding: 1px 0 0 2px; display: grid; background: linear-gradient(#d6e5fb, #f4f9ff 80%); border-bottom: 5px solid #8fb1e4; justify-content: start; }
.strip svg, .strip b { grid-area: 1 / 1; }
.strip b { font-size: 13px; padding: 2px 0 0 34px; }
.pane-body { flex: 1; background: #fff; padding: 0 1px; }
.ptable th { font-family: var(--ui); height: 32px; background: linear-gradient(#f3f8fd, #dbe6f3); border-right: 1px solid var(--line); border-bottom: 1px solid var(--line); }
.ptable .pad { background: #cfdbeb; }
.ptable tbody th { height: 22px; background: linear-gradient(90deg, #dce7f4 80%, #b9c8de); }
.ptable td { height: 22px; padding: 0 0 0 1px; background: #f3f3f3; border-right: 1px solid #b5c9e6; border-bottom: 1px solid #b5c9e6; }
.ptable tr:nth-child(odd) td { background: #e8f2fc; }
.ptable tr:nth-child(odd) td:nth-child(3), .ptable tr td:last-child, .ptable tr:nth-child(odd) td:last-child { background: #fff; }
.ptable tr:nth-child(odd) td.cur { background: #b1d4f7; }
.ptable .key { color: #b01c82; }
.note-cols { flex: 1; display: flex; min-height: 0; }
.note-col { width: 199px; flex: none; background: #efefef; border-right: 2px solid #7f9fc8; display: grid; grid-template-rows: 25px 1fr; grid-template-columns: 1fr 16px; }
.note-col.last { flex: 1; }
.note-col h4 { grid-column: 1 / 3; padding: 3px 4px; color: #2a4a85; background: linear-gradient(#f3f8fd, #dbe6f3); border-bottom: 1px solid var(--line); }
.note-col .vbar { grid-column: 2; justify-content: flex-end; }

/* status bar */
.status { height: 33px; flex: none; display: flex; align-items: center; padding: 0 30px 3px 7px; color: var(--navy); background: linear-gradient(#edf5fe, #d6e2ef); border-top: 2px solid #4f6787; border-bottom: 1px solid #5a6f8c; white-space: nowrap; }
.info { margin: 0 11px 0 8px; }
.user { margin-left: 8px; width: 84px; }
.model { width: 534px; }
.version { flex: 1; }
.status time { margin-left: 9px; }

/* task bar */
.taskbar { height: 40px; flex: none; display: flex; align-items: center; padding-left: 7px; gap: 3px; border-top: 1px solid #10142c;
  background:
    radial-gradient(ellipse 60px 24px at 1006px 0, #87aaa8 70%, #15191f 76% 94%, #0000 100%),
    radial-gradient(ellipse 60px 20px at 1260px 0, #9a3f8c 70%, #15162b 78% 96%, #0000 100%),
    radial-gradient(ellipse 34px 30px at 834px 40px, #b5c8ee 80%, #0000),
    linear-gradient(110deg, #24264a, #3c4270 25%, #5a5c88 38%, #a49cc6 42%, #a9a5d0 48%, #a68cbc 50%, #b2c0ea 52%, #aaa4d6 58%, #3f3f78 60%, #27305e 64%, #2a3a72 80%, #1d2350 88%, #1c2148); }
.start { margin-right: 12px; }
.app { width: 59px; height: 38px; display: grid; place-items: center; border: 1px solid #a8adc4; border-radius: 3px; background: linear-gradient(150deg, #a9aec6cc, #50557ccc 45%, #2f3563cc 55%, #4c5288cc); }
.app svg { max-height: 34px; }
.app.stack { width: 52px; margin-right: 7px; box-shadow: 4px 0 0 -1px #555b82, 5px 0 0 -1px #a8adc4; }
.app.lit { background: linear-gradient(150deg, #f2f0f8, #c9cce4 55%, #e6e6f4); border-color: #dfe2f0; }
.tray { margin-left: auto; }
.clock { width: 76px; margin: 0 0 2px 2px; display: flex; flex-direction: column; align-items: center; color: #fff; font: 12px/17px var(--ui); }
.peek { width: 14px; height: 39px; border: 1px solid #6f78a0; background: linear-gradient(#5a628c, #2a3060); }

/* floating editor window */
.notepad { position: absolute; left: 1284px; right: -12px; top: 4px; height: 926px; padding: 0 6px 7px; display: flex; flex-direction: column; border: 1px solid #1c2a3c; border-radius: 7px 7px 6px 6px; background: linear-gradient(90deg, #cfe3f4, #86c1ea 12%, #78b9e6 22%, #9ad0f4 45%, #8cc6ee 70%, #a9d9f8) top / 100% 30px no-repeat, #b2d1f2; box-shadow: 0 2px 14px 3px #000a, inset 0 0 0 1px #e6f3ff; font-family: var(--ui); }
.notepad header { height: 28px; flex: none; display: flex; align-items: center; padding: 0 0 2px 4px; gap: 4px; }
.notepad h2 { flex: 1; }
.win { align-self: flex-start; display: flex; border: 1px solid #4c6078; border-top: 0; border-radius: 0 0 5px 5px; margin-right: -6px; }
.win button { width: 29px; height: 19px; display: grid; place-items: center; background: linear-gradient(#d9e9f6, #a3bdd6 50%, #c2d9ec); border-right: 1px solid #4c6078; }
.notepad nav { height: 21px; flex: none; display: flex; align-items: center; gap: 14px; padding: 0 7px 1px; background: linear-gradient(#fff, #dde2f1 40%, #e2e4f4); border-top: 1px solid #4f6f90; border-bottom: 1px solid #a9adc0; }
.notepad textarea { flex: 1; resize: none; outline: 0; border: 1px solid #3f6791; border-width: 1px 1px 1px 0; margin: 0; padding: 2px 4px; overflow: hidden; background: #fff; color: #000; font: 500 17px/16px var(--song); }
.arrows { position: absolute; left: 1040px; top: 445px; pointer-events: none; }
```
